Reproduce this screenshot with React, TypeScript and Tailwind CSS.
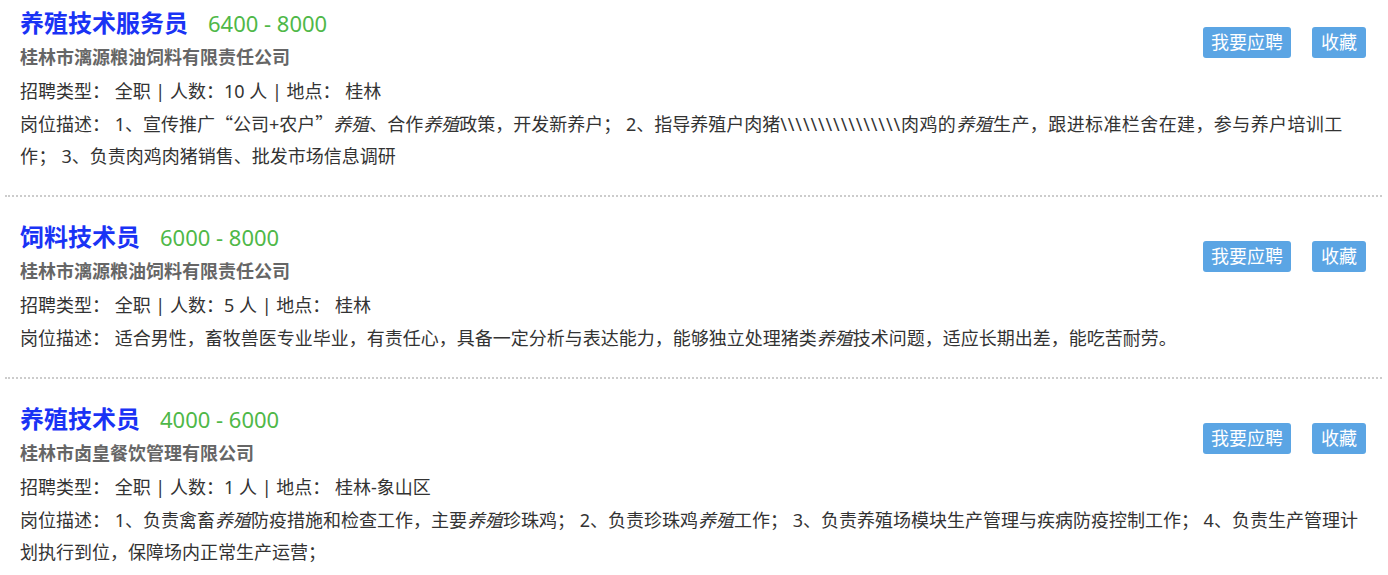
import React from "react"

type Job = {
  id: string
  title: string
  salary: string
  company: string
  count: string
  place: string
  desc: React.ReactNode
}

const Em = ({ children }: { children: React.ReactNode }) => (
  <em className="italic">{children}</em>
)

// full-width punctuation the way the CJK face draws it
const Cjk = ({ children }: { children: React.ReactNode }) => (
  <span
    className="leading-none"
    style={{ fontFamily: '"Noto Sans CJK SC", sans-serif' }}
  >
    {children}
  </span>
)

const jobs: Job[] = [
  {
    id: "1",
    title: "养殖技术服务员",
    salary: "6400 - 8000",
    company: "桂林市漓源粮油饲料有限责任公司",
    count: "10",
    place: "桂林",
    desc: (
      <>
        1、宣传推广<Cjk>“</Cjk>公司+农户<Cjk>”</Cjk>
        <Em>养殖</Em>、合作<Em>养殖</Em>政策，开发新养户； 2、指导养殖户肉猪
        <span className="tracking-[0.85px]">
          {"\\\\\\\\\\\\\\\\\\\\\\\\\\\\\\\\"}
        </span>
        <span className="tracking-[0.4px]">
          肉鸡的<Em>养殖</Em>生产，跟进标准栏舍在建，参与养户培训工作；
        </span>{" "}
        3、负责肉鸡肉猪销售、批发市场信息调研
      </>
    )
  },
  {
    id: "2",
    title: "饲料技术员",
    salary: "6000 - 8000",
    company: "桂林市漓源粮油饲料有限责任公司",
    count: "5",
    place: "桂林",
    desc: (
      <>
        适合男性，畜牧兽医专业毕业，有责任心，具备一定分析与表达能力，能够独立处理猪类<Em>养殖</Em>技术问题，适应长期出差，能吃苦耐劳。
      </>
    )
  },
  {
    id: "3",
    title: "养殖技术员",
    salary: "4000 - 6000",
    company: "桂林市卤皇餐饮管理有限公司",
    count: "1",
    place: "桂林-象山区",
    desc: (
      <>
        1、负责禽畜<Em>养殖</Em>防疫措施和检查工作，主要<Em>养殖</Em>珍珠鸡； 2、负责珍珠鸡<Em>养殖</Em>工作； 3、负责养殖场模块生产管理与疾病防疫控制工作； 4、负责生产管理计划执行到位，保障场内正常生产运营；
      </>
    )
  }
]

const JobCard = ({ job }: { job: Job }) => (
  <li className="border-b-2 border-dotted border-[#cccccc] pl-[15px] pr-4 pt-[23px] pb-[23px] last:border-b-0">
    <div className="float-right mt-[21px] flex gap-[21px]">
      <button className="h-[31px] rounded-[3px] bg-[#5ba5e4] px-[8px] text-[18px] leading-[31px] text-white">
        我要应聘
      </button>
      <button className="h-[31px] rounded-[3px] bg-[#5ba5e4] px-[9px] text-[18px] leading-[31px] text-white">
        收藏
      </button>
    </div>
    <div className="flex items-baseline">
      <h2 className="text-[24px] font-bold leading-[34px] text-[#1a33f5]">
        {job.title}
      </h2>
      <span className="ml-5 text-[22px] leading-[34px] text-[#4fb848]">
        {job.salary}
      </span>
    </div>
    <p className="text-[18px] font-bold leading-[34px] text-[#666666]">
      {job.company}
    </p>
    <p className="text-[18px] leading-[34px] text-[#333333]">
      招聘类型： 全职 | 人数：{job.count} 人 | 地点： {job.place}
    </p>
    <p className="text-[18px] leading-[32px] text-[#333333]">
      岗位描述： {job.desc}
    </p>
  </li>
)

const App = () => {
  return (
    <main
      className="h-[575px] overflow-hidden bg-white"
      style={{ fontFamily: '"Noto Sans", "Noto Sans CJK SC", sans-serif' }}
    >
      <ul className="mx-[5px] -mt-[17px] w-[1377px]">
        {jobs.map((job) => (
          <JobCard key={job.id} job={job} />
        ))}
      </ul>
    </main>
  )
}

export default App
